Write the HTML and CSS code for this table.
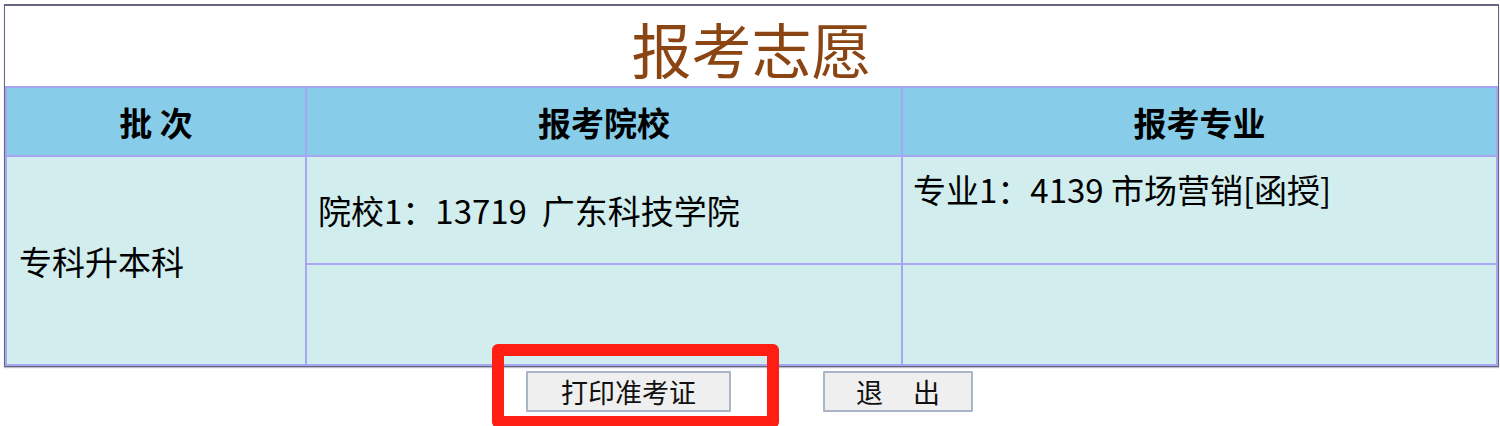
FILE: index.html
```html
<!DOCTYPE html>
<html lang="zh-CN">
<head>
<meta charset="utf-8">
<title>报考志愿</title>
<link rel="stylesheet" href="styles.css">
</head>
<body>
<div class="page">
  <div class="frame">
    <table class="wish">
      <colgroup>
        <col class="c1">
        <col class="c2">
        <col class="c3">
      </colgroup>
      <tr class="title-row">
        <td colspan="3" class="title">报考志愿</td>
      </tr>
      <tr class="head-row">
        <th>批&nbsp;次</th>
        <th>报考院校</th>
        <th>报考专业</th>
      </tr>
      <tr class="row1">
        <td rowspan="2" class="batch">专科升本科</td>
        <td class="school">院校1：13719&nbsp;&nbsp;广东科技学院</td>
        <td class="major">专业1：4139 市场营销[函授]</td>
      </tr>
      <tr class="row2">
        <td></td>
        <td></td>
      </tr>
    </table>
  </div>
  <div class="actions">
    <button class="btn btn-print" type="button">打印准考证</button>
    <button class="btn btn-exit" type="button">退&nbsp;&nbsp;&nbsp;&nbsp;&nbsp;出</button>
  </div>
  <div class="highlight"></div>
</div>
</body>
</html>
```
FILE: styles.css
```css
html, body {
  margin: 0;
  padding: 0;
  background: #ffffff;
}

body {
  font-family: "Noto Sans CJK SC", "Noto Sans", "Liberation Sans", sans-serif;
  color: #000;
}

.page {
  position: relative;
  width: 1500px;
  height: 426px;
  padding: 4px 0 0 4px;
  box-sizing: border-box;
  overflow: hidden;
}

.frame {
  width: 1495px;
  box-sizing: border-box;
  border: 1px solid #66667e;
  border-top-width: 2px;
  box-shadow: 0 1px 1px rgba(90, 90, 120, 0.4);
}

.wish {
  width: 100%;
  border-collapse: collapse;
  border: 2px solid #a6a6f2;
  table-layout: fixed;
}

.c1 { width: 300px; }
.c2 { width: 596px; }
.c3 { width: 595px; }

.wish td,
.wish th {
  border: 2px solid #a6a6f2;
  padding: 0 10px;
}

.wish .title {
  height: 81px;
  background: #ffffff;
  text-align: center;
  vertical-align: middle;
  font-size: 60px;
  line-height: 1;
  color: #8b4513;
  font-weight: 400;
  padding-top: 4px;
  box-sizing: border-box;
  border-top: hidden;
  border-left: hidden;
  border-right: hidden;
}

.head-row th {
  height: 69px;
  background: #87cde9;
  font-size: 33px;
  font-weight: 700;
  text-align: center;
  vertical-align: middle;
  box-sizing: border-box;
}

.row1 td,
.row2 td {
  background: #d2eded;
  font-size: 33px;
  font-weight: 400;
  vertical-align: middle;
  white-space: nowrap;
}

.row1 td {
  height: 108px;
  box-sizing: border-box;
}

.row2 td {
  height: 101px;
  box-sizing: border-box;
}

.wish .batch {
  padding-left: 12px;
}

.wish .school {
  padding-left: 11px;
}

.wish .major {
  vertical-align: top;
  padding-top: 8px;
  padding-left: 10px;
}

.actions {
  display: flex;
  justify-content: center;
  gap: 92px;
  margin-top: 4px;
  padding-right: 5px;
}

.btn {
  height: 41px;
  border: 2px solid #aab6c8;
  background: #efefef;
  font-family: "Noto Sans CJK SC", "Noto Sans", sans-serif;
  font-size: 27px;
  line-height: 1;
  color: #111;
  padding: 0;
  border-radius: 1px;
}

.btn-print {
  width: 205px;
}

.btn-exit {
  width: 150px;
}

.highlight {
  position: absolute;
  left: 492px;
  top: 344px;
  width: 287px;
  height: 84px;
  border: 12px solid #ff1e12;
  border-radius: 6px;
  box-sizing: border-box;
}
```
